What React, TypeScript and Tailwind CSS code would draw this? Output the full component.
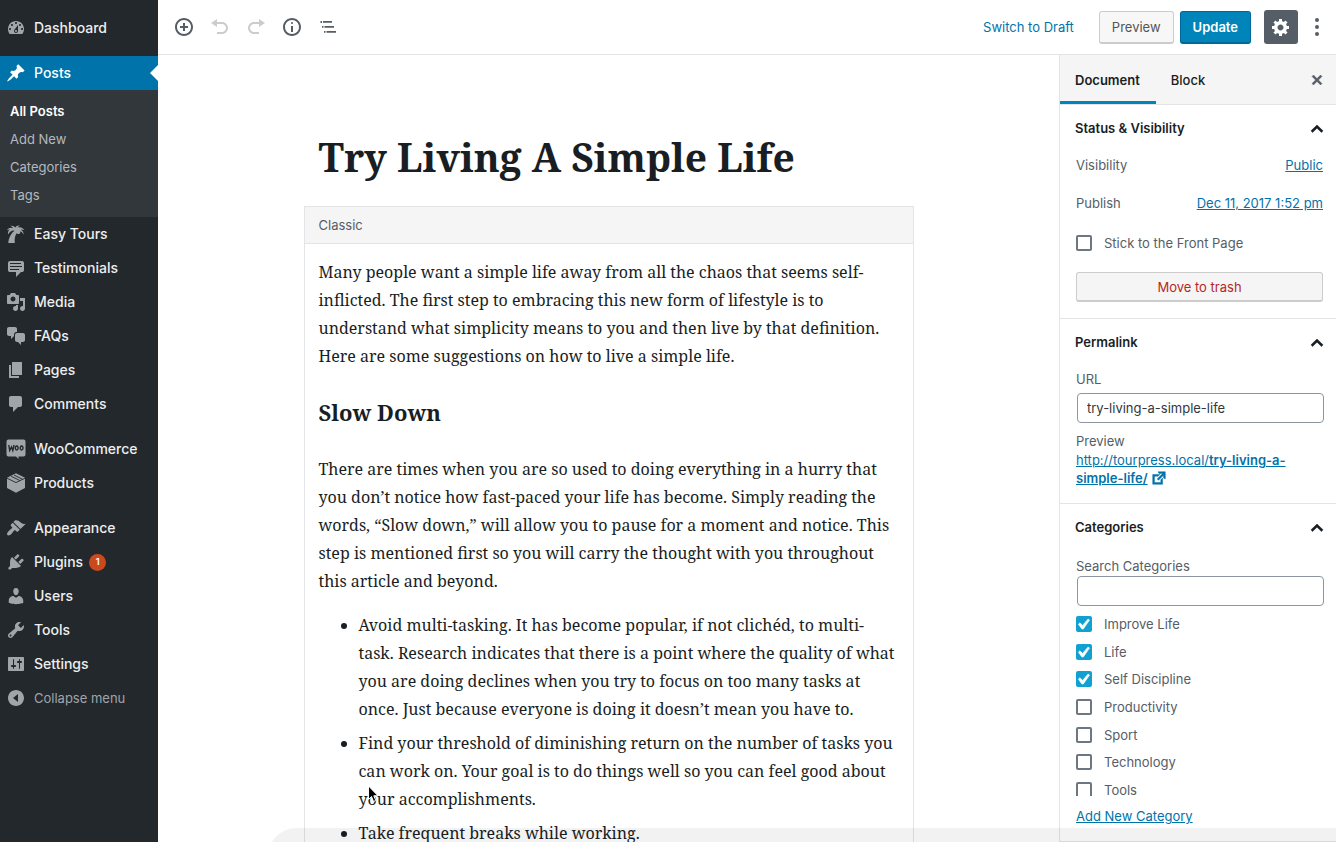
import React from "react";

const ICON = {
  dashboard:
    "M3.76 16h12.48c1.1-1.37 1.76-3.11 1.76-5 0-4.42-3.58-8-8-8s-8 3.58-8 8c0 1.89.66 3.63 1.76 5zM10 4c.55 0 1 .45 1 1s-.45 1-1 1-1-.45-1-1 .45-1 1-1zM6 6c.55 0 1 .45 1 1s-.45 1-1 1-1-.45-1-1 .45-1 1-1zm8 0c.55 0 1 .45 1 1s-.45 1-1 1-1-.45-1-1 .45-1 1-1zm-5.37 5.55L12 7v6c0 1.1-.9 2-2 2s-2-.9-2-2c0-.57.24-1.08.63-1.45zM4 10c.55 0 1 .45 1 1s-.45 1-1 1-1-.45-1-1 .45-1 1-1zm12 0c.55 0 1 .45 1 1s-.45 1-1 1-1-.45-1-1 .45-1 1-1zm-5 3c0-.55-.45-1-1-1s-1 .45-1 1 .45 1 1 1 1-.45 1-1z",
  pin: "M10.44 3.02l1.82-1.82 6.36 6.35-1.83 1.82c-1.05-.68-2.48-.57-3.41.36l-.75.75c-.92.93-1.04 2.35-.35 3.41l-1.83 1.82-2.41-2.41-2.8 2.79c-.42.42-3.38 2.71-3.8 2.29s1.86-3.39 2.28-3.81l2.79-2.79L4.1 9.36l1.83-1.82c1.05.69 2.48.57 3.4-.36l.75-.75c.93-.92 1.05-2.35.36-3.41z",
  palm: "M8.600 6.600C6 6 4 7.600 2 10.400c-.3-1.900.2-3.800 1.700-4.900-1-.1-1.900.2-2.700.8.8-2.300 3.600-3.300 6-2.100C6.400 3 5.600 2.200 4.400 1.700c2.300-.3 4 .4 4.900 1.900C10 2.100 11.800 1.300 13.900 1.700c-1.200.4-1.900 1-2.300 1.900 2.200-.9 5.200-.1 6.900 2.600-1.400-.7-2.700-.9-3.800-.7 1.900 1 3 2.900 2.900 5.300-.8-1.700-1.900-2.900-3.400-3.500.4 1.300-.2 2.700-1.500 2.800-.9.1-1.500-.4-1.700-1.200C9 10.800 8.300 14.700 8.800 19H2.200c.5-5 2.600-9.300 6.400-12.400z",
  testimonial:
    "M4 3h12c.55 0 1.02.2 1.41.59S18 4.45 18 5v7c0 .55-.2 1.02-.59 1.41S16.55 14 16 14h-1l-5 5v-5H4c-.55 0-1.02-.2-1.41-.59S2 12.55 2 12V5c0-.55.2-1.02.59-1.41S3.45 3 4 3zm11 2H4v1h11V5zm1 3H4v1h12V8zm-3 3H4v1h9v-1z",
  media:
    "M13 11V4c0-.55-.45-1-1-1h-1.67L9 1H5L3.67 3H2c-.55 0-1 .45-1 1v7c0 .55.45 1 1 1h10c.55 0 1-.45 1-1zM7 4.5c1.38 0 2.5 1.12 2.5 2.5S8.38 9.5 7 9.5 4.5 8.38 4.5 7 5.62 4.5 7 4.5zM14 6h5v10.5c0 1.38-1.12 2.5-2.5 2.5S14 17.88 14 16.5s1.12-2.5 2.5-2.5c.17 0 .34.02.5.05V9h-3V6zm-4 8.05V13h2v3.5c0 1.38-1.12 2.5-2.5 2.5S7 17.88 7 16.5 8.12 14 9.5 14c.17 0 .34.02.5.05z",
  chat: "M11 6h-.82C9.07 6 8 7.2 8 8.16V10l-3 3v-3H3c-1.1 0-2-.9-2-2V3c0-1.1.9-2 2-2h6c1.1 0 2 .9 2 2v3zm0 1h6c1.1 0 2 .9 2 2v5c0 1.1-.9 2-2 2h-2v3l-3-3h-1c-1.1 0-2-.9-2-2V9c0-1.1.9-2 2-2z",
  page: "M6 15V2h10v13H6zm-1 1h8v2H3V5h2v11z",
  comment: "M5 2h9c1.1 0 2 .9 2 2v7c0 1.1-.9 2-2 2h-2l-5 5v-5H5c-1.1 0-2-.9-2-2V4c0-1.1.9-2 2-2z",
  woo: "M2.500.5h15a2 2 0 0 1 2 2v13a2 2 0 0 1-2 2H12.500v2.500l-2.500-2.500H2.500a2 2 0 0 1-2-2v-13a2 2 0 0 1 2-2z",
  product: "M10 .3l9 4.500v10.200l-9 4.800-9-4.800V4.800z",
  appearance:
    "M14.48 11.06L7.41 3.99l1.5-1.5c.5-.56 2.3-.47 3.51.32 1.21.8 1.43 1.28 2.91 2.1 1.18.64 2.45 1.26 4.45.85zm-.71.71L6.7 4.7 4.93 6.47c-.39.39-.39 1.02 0 1.41l1.06 1.06c.39.39.39 1.03 0 1.42-.6.6-1.43 1.11-2.21 1.69-.35.26-.7.53-1.01.84C1.43 14.23.4 16.08 1.4 17.07c.99 1 2.84-.03 4.18-1.36.31-.31.58-.66.85-1.02.57-.78 1.08-1.61 1.69-2.21.39-.39 1.02-.39 1.41 0l1.06 1.06c.39.39 1.02.39 1.41 0z",
  plugins:
    "M13.11 4.36L9.87 7.6 8 5.73l3.24-3.24c.35-.34 1.05-.2 1.56.32.52.51.66 1.21.31 1.55zm-8 1.77l.91-1.12 9.01 9.01-1.19.84c-.71.71-2.63 1.16-3.82 1.16H6.14L4.9 17.26c-.59.59-1.54.59-2.12 0-.59-.58-.59-1.53 0-2.12l1.24-1.24v-3.88c0-1.13.4-3.19 1.09-3.89zm7.26 3.97l3.24-3.24c.34-.35 1.04-.21 1.55.31.52.51.66 1.21.31 1.55l-3.24 3.25z",
  users:
    "M10 9.25c-2.27 0-2.73-3.44-2.73-3.44C7 4.02 7.82 2 9.97 2c2.16 0 2.98 2.02 2.71 3.81 0 0-.41 3.44-2.68 3.44zm0 2.57L12.72 10c2.39 0 4.52 2.33 4.52 4.53v2.49s-3.65 1.13-7.24 1.13c-3.65 0-7.24-1.13-7.24-1.13v-2.49c0-2.25 1.94-4.48 4.47-4.48z",
  tools:
    "M16.68 9.77c-1.34 1.34-3.3 1.67-4.95.99l-5.41 6.52c-.99.99-2.59.99-3.58 0s-.99-2.59 0-3.57l6.52-5.42c-.68-1.65-.35-3.61.99-4.95 1.28-1.28 3.12-1.62 4.72-1.06l-2.89 2.89 2.82 2.82 2.86-2.87c.53 1.58.18 3.39-1.08 4.65zM3.81 16.21c.4.39 1.04.39 1.43 0 .4-.4.4-1.04 0-1.43-.39-.4-1.03-.4-1.43 0-.39.39-.39 1.03 0 1.43z",
  settings:
    "M18 16V4c0-.55-.45-1-1-1H3c-.55 0-1 .45-1 1v12c0 .55.45 1 1 1h14c.55 0 1-.45 1-1zM8 11h1c.55 0 1 .45 1 1s-.45 1-1 1H8v1.5c0 .28-.22.5-.5.5s-.5-.22-.5-.5V13H6c-.55 0-1-.45-1-1s.45-1 1-1h1V5.5c0-.28.22-.5.5-.5s.5.22.5.5V11zm5-2h-1c-.55 0-1-.45-1-1s.45-1 1-1h1V5.5c0-.28.22-.5.5-.5s.5.22.5.5V7h1c.55 0 1 .45 1 1s-.45 1-1 1h-1v5.5c0 .28-.22.5-.5.5s-.5-.22-.5-.5V9z",
  collapse: "M10 2c4.42 0 8 3.58 8 8s-3.58 8-8 8-8-3.58-8-8 3.58-8 8-8zm2 12V6l-5 4z",
  gear: "M18 12h-2.18c-.17.7-.44 1.35-.81 1.93l1.54 1.54-2.1 2.1-1.54-1.54c-.58.36-1.23.63-1.91.79V19H8v-2.18c-.68-.16-1.33-.43-1.91-.79l-1.54 1.54-2.12-2.12 1.54-1.54c-.36-.58-.63-1.23-.79-1.91H1V9.03h2.17c.16-.7.44-1.35.8-1.94L2.43 5.55l2.1-2.1 1.54 1.54c.58-.37 1.24-.64 1.93-.81V2h3v2.18c.68.16 1.33.43 1.91.79l1.54-1.54 2.12 2.12-1.54 1.54c.36.59.64 1.24.8 1.94H18V12zm-8.5 1.5c1.66 0 3-1.34 3-3s-1.34-3-3-3-3 1.34-3 3 1.34 3 3 3z",
  insert:
    "M10 1c-5 0-9 4-9 9s4 9 9 9 9-4 9-9-4-9-9-9zm0 16c-3.9 0-7-3.1-7-7s3.1-7 7-7 7 3.1 7 7-3.1 7-7 7zm1-11H9v3H6v2h3v3h2v-3h3V9h-3V6z",
  undo: "M12 5H7V2L1 6l6 4V7h5c2.2 0 4 1.8 4 4s-1.8 4-4 4H7v2h5c3.3 0 6-2.7 6-6s-2.7-6-6-6z",
  redo: "M8 5h5V2l6 4-6 4V7H8c-2.2 0-4 1.8-4 4s1.8 4 4 4h5v2H8c-3.3 0-6-2.7-6-6s2.7-6 6-6z",
  info: "M9 15h2V9H9v6zm1-10c-.5 0-1 .5-1 1s.5 1 1 1 1-.5 1-1-.5-1-1-1zm0-4c-5 0-9 4-9 9s4 9 9 9 9-4 9-9-4-9-9-9zm0 16c-3.9 0-7-3.1-7-7s3.1-7 7-7 7 3.1 7 7-3.1 7-7 7z",
  outline: "M2.500 4H4v2H2.500zM5 4h9v1.700H5zM4 9h1.500v1.700H4zM6.500 9H16v1.700H6.500zM6 14h1.500v1.700H6zM8.500 14H18v1.700H8.500z",
  more: "M10 1a2 2 0 1 1 0 4 2 2 0 0 1 0-4zM10 8a2 2 0 1 1 0 4 2 2 0 0 1 0-4zM10 15a2 2 0 1 1 0 4 2 2 0 0 1 0-4z",
  close:
    "M14.95 6.46L11.41 10l3.54 3.54-1.41 1.41L10 11.42l-3.53 3.53-1.42-1.42L8.58 10 5.05 6.47l1.42-1.42L10 8.58l3.54-3.53z",
  external: "M9 3h8v8l-2-1V6.92l-5.6 5.59-1.41-1.41L14.08 5H10zm3 12v-3l2-2v7H3V6h8L9 8H5v7h7z",
  up: "M10 6l6 5.800-1.500 1.700L10 9.200l-4.500 4.300L4 11.800z",
  check: "M14.83 4.89l1.34.94-5.81 8.38H9.02L5.78 9.67l1.34-1.25 2.57 2.4z",
};

type IconName = keyof typeof ICON;

const HEAVY: IconName[] = ["external", "close", "up"];

function Icon({ name, className = "size-5" }: { name: IconName; className?: string }) {
  return (
    <svg viewBox="0 0 20 20" fill="currentColor" fillRule={name === "gear" ? "evenodd" : "nonzero"} className={className} aria-hidden="true">
      <path d={ICON[name]} stroke={HEAVY.includes(name) ? "currentColor" : "none"} strokeWidth="0.5" />
      {name === "woo" && (
        <path
          d="M2.800 6l.9 5.500L5.500 8l1.300 3.500L8 6M10.700 7a1.400 2 0 1 0 .01 0zM15.600 7a1.400 2 0 1 0 .01 0z"
          fill="none"
          stroke="#23282d"
          strokeWidth="1.400"
        />
      )}
      {name === "product" && (
        <path d="M1 5.200l9 4.400 9-4.400M5.200 3.300l8.600 4.200M8 2l8.400 4.200" fill="none" stroke="#23282d" strokeWidth="0.900" />
      )}
    </svg>
  );
}

const MENU: { label: string; icon: IconName; badge?: string }[][] = [
  [
    { label: "Easy Tours", icon: "palm" },
    { label: "Testimonials", icon: "testimonial" },
    { label: "Media", icon: "media" },
    { label: "FAQs", icon: "chat" },
    { label: "Pages", icon: "page" },
    { label: "Comments", icon: "comment" },
  ],
  [
    { label: "WooCommerce", icon: "woo" },
    { label: "Products", icon: "product" },
  ],
  [
    { label: "Appearance", icon: "appearance" },
    { label: "Plugins", icon: "plugins", badge: "1" },
    { label: "Users", icon: "users" },
    { label: "Tools", icon: "tools" },
    { label: "Settings", icon: "settings" },
  ],
];

function AdminMenu() {
  return (
    <nav aria-label="Main menu" className="w-[158px] shrink-0 bg-[#23282d] text-sm font-medium text-[#eee]">
      <a href="#dashboard" className="mt-[11px] flex h-[34px] items-center gap-2 pl-1.5">
        <Icon name="dashboard" className="size-5 text-[#a0a5aa]" />
        Dashboard
      </a>
      <a href="#posts" className="relative mt-[11px] flex h-[34px] items-center gap-2 bg-[#0073aa] pl-1.5 text-white">
        <Icon name="pin" />
        Posts
        <span className="absolute top-[9px] right-0 border-y-8 border-r-8 border-y-transparent border-r-white" />
      </a>
      <ul className="bg-[#32373c] px-2.5 pt-[7px] pb-2 text-[13px] text-[#b4b9be]">
        {["All Posts", "Add New", "Categories", "Tags"].map((label, i) => (
          <li key={label}>
            <a href={"#" + label} className={i === 0 ? "flex h-7 items-center font-semibold text-white" : "flex h-7 items-center font-normal"}>
              {label}
            </a>
          </li>
        ))}
      </ul>
      <div className="flex flex-col gap-[11px]">
        {MENU.map((group, i) => (
          <ul key={i}>
            {group.map((item) => (
              <li key={item.label}>
                <a href={"#" + item.label} className="flex h-[34px] items-center gap-2 pl-1.5">
                  <Icon name={item.icon} className="size-5 text-[#a0a5aa]" />
                  {item.label}
                  {item.badge && (
                    <span className="-ml-0.5 flex size-[17px] items-center justify-center rounded-full bg-[#ca4a1f] text-[9px] font-semibold text-white">
                      {item.badge}
                    </span>
                  )}
                </a>
              </li>
            ))}
          </ul>
        ))}
      </div>
      <button type="button" className="flex h-[34px] w-full items-center gap-2 pl-1.5 text-[13px] font-normal text-[#a0a5aa]">
        <Icon name="collapse" />
        Collapse menu
      </button>
    </nav>
  );
}

function TopBar() {
  const tools: { name: IconName; label: string; off?: boolean }[] = [
    { name: "insert", label: "Add block" },
    { name: "undo", label: "Undo", off: true },
    { name: "redo", label: "Redo", off: true },
    { name: "info", label: "Content structure" },
    { name: "outline", label: "Block navigation" },
  ];
  return (
    <header className="flex h-[55px] shrink-0 items-center justify-between border-b border-[#e2e4e7] bg-white pr-[9px] pl-4">
      <div className="flex gap-4">
        {tools.map((t) => (
          <button key={t.name} type="button" aria-label={t.label} disabled={t.off} className={t.off ? "text-[#ccc]" : "text-[#555d66]"}>
            <Icon name={t.name} />
          </button>
        ))}
      </div>
      <div className="flex items-center text-[13px]">
        <button type="button" className="mr-[25px] pt-0.5 text-[#0073aa]">Switch to Draft</button>
        <button type="button" className="mr-1.5 h-[33px] rounded-[3px] border border-b-2 border-[#ccc] bg-[#f7f7f7] px-3 pt-0.5 text-[#555]">
          Preview
        </button>
        <button type="button" className="mr-[13px] h-[33px] rounded-[3px] border border-b-2 border-[#006799] bg-[#0085ba] px-3 pt-0.5 font-semibold text-white">
          Update
        </button>
        <button type="button" aria-label="Settings" className="mr-[9px] flex size-[34px] items-center justify-center rounded-[3px] bg-[#555d66] text-white">
          <Icon name="gear" />
        </button>
        <button type="button" aria-label="More" className="text-[#555d66]">
          <Icon name="more" />
        </button>
      </div>
    </header>
  );
}

function Lines({ lines }: { lines: string[] }) {
  return (
    <>
      {lines.map((line) => (
        <span key={line} className="block whitespace-nowrap">
          {line}{" "}
        </span>
      ))}
    </>
  );
}

const INTRO = [
  "Many people want a simple life away from all the chaos that seems self-",
  "inflicted. The first step to embracing this new form of lifestyle is to",
  "understand what simplicity means to you and then live by that definition.",
  "Here are some suggestions on how to live a simple life.",
];

const SLOW = [
  "There are times when you are so used to doing everything in a hurry that",
  "you don’t notice how fast-paced your life has become. Simply reading the",
  "words, “Slow down,” will allow you to pause for a moment and notice. This",
  "step is mentioned first so you will carry the thought with you throughout",
  "this article and beyond.",
];

const TIPS = [
  [
    "Avoid multi-tasking. It has become popular, if not clichéd, to multi-",
    "task. Research indicates that there is a point where the quality of what",
    "you are doing declines when you try to focus on too many tasks at",
    "once. Just because everyone is doing it doesn’t mean you have to.",
  ],
  [
    "Find your threshold of diminishing return on the number of tasks you",
    "can work on. Your goal is to do things well so you can feel good about",
    "your accomplishments.",
  ],
  ["Take frequent breaks while working."],
];

function Editor() {
  return (
    <main className="min-w-0 flex-1 overflow-hidden bg-white font-['Noto_Serif','DejaVu_Serif_Condensed','DejaVu_Serif',serif] text-[#191e23]">
      <div className="mx-auto w-[610px]">
        <h1 className="px-[15px] pt-[74px] text-[39px] leading-[56px] font-bold whitespace-nowrap">Try Living A Simple Life</h1>
        <div className="mt-[21px] border border-[#e2e4e7]">
          <div className="flex h-[37px] items-center border-b border-[#e2e4e7] bg-[#f5f5f5] px-[14px] pt-0.5 font-['Inter',sans-serif] text-[13px] text-[#555d66]">
            Classic
          </div>
          <div className="px-[14px] pt-[14px] text-base leading-7">
            <p><Lines lines={INTRO} /></p>
            <h2 className="mt-[26px] text-[22px] leading-8 font-bold">Slow Down</h2>
            <p className="mt-[27px]"><Lines lines={SLOW} /></p>
            <ul className="mt-4 flex flex-col gap-1.5 pl-10">
              {TIPS.map((tip) => (
                <li key={tip[0]} className="relative">
                  <span className="absolute top-[12px] -left-[18px] size-1.5 rounded-full bg-[#191e23]" />
                  <Lines lines={tip} />
                </li>
              ))}
            </ul>
          </div>
        </div>
      </div>
    </main>
  );
}

function Panel({ title, className, children }: { title: string; className: string; children: React.ReactNode }) {
  return (
    <section className="border-b border-[#e2e4e7]">
      <h2>
        <button type="button" aria-expanded="true" className="flex h-[46px] w-full items-center justify-between pt-0.5 pr-[9px] pl-[15px] font-semibold text-[#191e23]">
          {title}
          <Icon name="up" />
        </button>
      </h2>
      <div className={className}>{children}</div>
    </section>
  );
}

function Check({ label, checked = false }: { label: string; checked?: boolean }) {
  return (
    <label className="flex items-center gap-3 leading-4">
      <span className="relative flex size-4">
        <input
          type="checkbox"
          defaultChecked={checked}
          className="peer size-4 appearance-none rounded-[2px] border-2 border-[#6c7781] bg-white checked:border-[#11a0d2] checked:bg-[#11a0d2]"
        />
        <svg viewBox="3.500 2 15 15" fill="currentColor" className="pointer-events-none absolute inset-0 hidden size-4 text-white peer-checked:block" aria-hidden="true">
          <path d={ICON.check} stroke="currentColor" strokeWidth="0.600" />
        </svg>
      </span>
      {label}
    </label>
  );
}

const CATEGORIES: [string, boolean][] = [
  ["Improve Life", true],
  ["Life", true],
  ["Self Discipline", true],
  ["Productivity", false],
  ["Sport", false],
  ["Technology", false],
  ["Tools", false],
];

function Sidebar() {
  const field = "ml-px h-[30px] w-full rounded-[4px] border border-[#8d96a0] bg-white px-[9px] text-[#32373c]";
  return (
    <aside className="w-[277px] shrink-0 border-l border-[#e2e4e7] bg-white text-[13px] text-[#555d66]">
      <div className="flex h-[50px] border-b border-[#e2e4e7] bg-[#f5f5f5] text-[#191e23]">
        <button type="button" className="border-b-3 border-[#0085ba] pt-[5px] pr-4 pl-[15px] font-semibold">Document</button>
        <button type="button" className="pt-0.5 pr-4 pl-[15px] font-medium">Block</button>
        <button type="button" aria-label="Close settings" className="mr-[9px] ml-auto text-[#555d66]">
          <Icon name="close" />
        </button>
      </div>
      <Panel title="Status & Visibility" className="flex flex-col px-4 pr-[13px] pb-4">
        <div className="flex h-[30px] items-center justify-between">
          Visibility
          <a href="#visibility" className="text-[#0073aa] underline">Public</a>
        </div>
        <div className="mt-2 flex h-[30px] items-center justify-between">
          Publish
          <a href="#publish" className="text-[#0073aa] underline">Dec 11, 2017 1:52 pm</a>
        </div>
        <div className="mt-4"><Check label="Stick to the Front Page" /></div>
        <button type="button" className="mt-[21px] h-[30px] rounded-[3px] border border-b-2 border-[#ccc] bg-[#f5f5f5] pt-0.5 text-[#b52727]">
          Move to trash
        </button>
      </Panel>
      <Panel title="Permalink" className="px-4 pr-[13px] pb-4">
        <label htmlFor="url" className="mt-1 block leading-5">URL</label>
        <input id="url" type="text" defaultValue="try-living-a-simple-life" className={field + " mt-1"} />
        <p className="mt-[9px] leading-[18px]">Preview</p>
        <a href="#permalink" className="mt-px block leading-[18px] text-[#0073aa]">
          <span className="underline">http://tourpress.local/<b className="font-semibold">try-living-a-<br />simple-life/</b></span>
          <Icon name="external" className="ml-0.5 inline size-[18px] align-[-4px]" />
        </a>
      </Panel>
      <Panel title="Categories" className="px-4 pr-[13px] pb-[15px]">
        <label htmlFor="search" className="mt-1.5 block leading-5">Search Categories</label>
        <input id="search" type="text" className={field} />
        <div className="mt-2.5 h-[180px] overflow-hidden">
          <div className="flex h-[182px] flex-col justify-between">
            {CATEGORIES.map(([label, on]) => (
              <Check key={label} label={label} checked={on} />
            ))}
          </div>
        </div>
        <a href="#new-category" className="mt-2.5 block leading-5 text-[#0073aa] underline">Add New Category</a>
      </Panel>
    </aside>
  );
}

export default function App() {
  return (
    <div className="relative flex h-screen overflow-hidden bg-white font-['Inter',sans-serif] antialiased">
      <AdminMenu />
      <div className="flex min-w-0 flex-1 flex-col">
        <TopBar />
        <div className="flex min-h-0 flex-1">
          <Editor />
          <Sidebar />
        </div>
      </div>
      <div className="pointer-events-none absolute right-0 -bottom-[42px] left-[268px] h-14 rounded-l-[28px] bg-black/5" />
      <svg viewBox="0 0 12 18" className="pointer-events-none absolute top-[785px] left-[367px] h-[18px] w-3" aria-hidden="true">
        <path d="M1.500 1v13.500l3-3 2 5 2.300-1-2-4.700h4.200z" fill="#000" stroke="#fff" strokeWidth="1" />
      </svg>
    </div>
  );
}
